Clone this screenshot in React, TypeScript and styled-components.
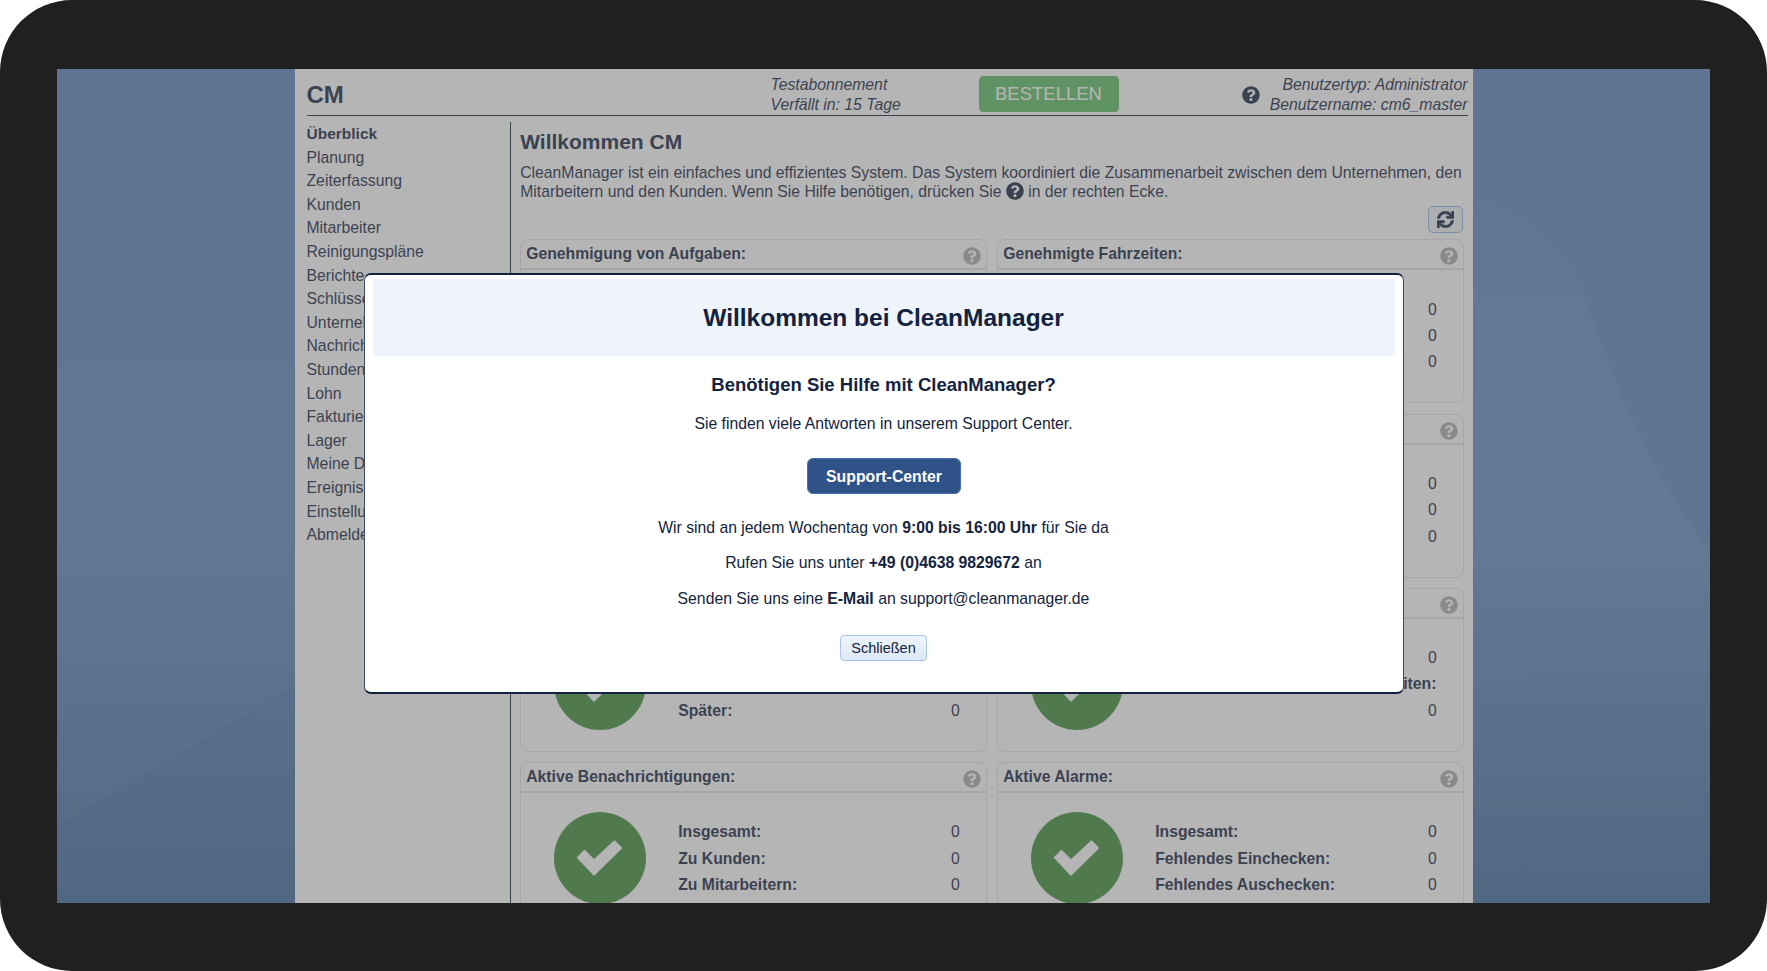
import React from 'react';
import styled, { createGlobalStyle } from 'styled-components';
import { FaQuestionCircle, FaSync } from 'react-icons/fa';

const GlobalStyle = createGlobalStyle`
    html, body {
        margin: 0;
        padding: 0;
        background: #ffffff;
    }
    body {
        font-family: "Liberation Sans", Arial, sans-serif;
        color: #13233f;
    }
`;

const Frame = styled.div`
    width: 1767px;
    height: 971px;
    box-sizing: border-box;
    padding: 69px 57px 68px;
    background: #212021;
    border-radius: 72px;
    overflow: hidden;
`;

const Screen = styled.div`
    position: relative;
    height: 834px;
    display: flex;
    justify-content: center;
    overflow: hidden;
    background: #5a85be;
`;

const Wallpaper = styled.svg`
    position: absolute;
    inset: 0;
    width: 100%;
    height: 100%;
`;

const Page = styled.div`
    position: relative;
    width: 1178px;
    box-sizing: border-box;
    padding: 0 6px 0 12px;
    background: #ffffff;
    display: flex;
    flex-direction: column;
`;

const Header = styled.header`
    height: 47px;
    flex: none;
    box-sizing: border-box;
    display: grid;
    grid-template-columns: 464px 208px 140px 1fr;
    align-items: center;
    margin-right: -1px;
    border-bottom: 1px solid #13233f;
`;

const Brand = styled.div`
    font-size: 24px;
    font-weight: 700;
    padding-top: 5px;
`;

const Trial = styled.div`
    font-size: 15.75px;
    font-style: italic;
    line-height: 20px;
    padding-top: 5px;
`;

const OrderButton = styled.button`
    height: 36px;
    margin-top: 3px;
    border: 1px solid #5cbf63;
    border-radius: 4px;
    background: #5cbf63;
    color: #ffffff;
    font-family: inherit;
    font-size: 18.5px;
    padding: 0;
`;

const UserBox = styled.div`
    display: flex;
    justify-content: flex-end;
    align-items: center;
    gap: 10px;
    font-size: 15.75px;
    font-style: italic;
    line-height: 20px;
    text-align: right;
    padding-top: 5px;
`;

const Body = styled.div`
    flex: 1;
    display: flex;
    margin-top: 6px;
    min-height: 0;
`;

const Sidebar = styled.nav`
    width: 203px;
    flex: none;
    border-right: 1px solid #13233f;
`;

const NavItem = styled.div<{ $active?: boolean }>`
    height: 23.6px;
    line-height: 23.6px;
    font-size: ${(p) => (p.$active ? 15.5 : 15.75)}px;
    font-weight: ${(p) => (p.$active ? 700 : 400)};
    white-space: nowrap;
`;

const Main = styled.main`
    flex: 1;
    min-width: 0;
    padding: 8px 3px 0 9.7px;
`;

const Title = styled.h1`
    margin: 0;
    font-size: 21px;
    line-height: 24px;
    font-weight: 700;
`;

const Intro = styled.p`
    margin: 10px 0 0;
    font-size: 15.75px;
    line-height: 18.7px;

    svg {
        vertical-align: 0;
        margin: -3px 0;
    }
`;

const Toolbar = styled.div`
    display: flex;
    justify-content: flex-end;
    margin-top: 5px;
    padding-right: 1px;
`;

const RefreshButton = styled.button`
    width: 35px;
    height: 27px;
    padding: 0;
    display: flex;
    align-items: center;
    justify-content: center;
    border: 1.5px solid #8fb6ea;
    border-radius: 5px;
    background: #f0f3f8;
    color: #13233f;

    svg {
        stroke: currentColor;
        stroke-width: 18px;
    }
`;

const Grid = styled.div`
    display: grid;
    grid-template-columns: 466.7px 466.7px;
    column-gap: 10.3px;
    row-gap: 10.2px;
    margin-top: 6px;
`;

const Card = styled.section`
    height: 164px;
    box-sizing: border-box;
    border: 1.5px solid #e4e4e4;
    border-radius: 8px;
`;

const CardHead = styled.div`
    height: 30px;
    box-sizing: border-box;
    display: flex;
    justify-content: space-between;
    padding: 5px 5px 0;
    border-bottom: 2px solid #e2e2e2;
`;

const CardTitle = styled.div`
    font-size: 15.75px;
    line-height: 18px;
    font-weight: 700;
`;

const HelpIcon = styled(FaQuestionCircle)`
    color: #adadad;
    margin-top: 2px;
`;

const CardBody = styled.div`
    display: flex;
    padding: 19px 0 0 33px;
`;

const StatusIcon = styled.svg`
    flex: none;
    width: 92px;
    height: 92px;
`;

const Stats = styled.div`
    flex: 1;
    min-width: 0;
    padding: 7.4px 26px 0 32px;
`;

const StatRow = styled.div`
    height: 26.3px;
    line-height: 26.3px;
    display: flex;
    justify-content: space-between;
    font-size: 15.75px;
`;

const StatLabel = styled.span`
    font-weight: 700;
    white-space: nowrap;
`;

const Backdrop = styled.div`
    position: absolute;
    inset: 0;
    display: flex;
    justify-content: center;
    align-items: flex-start;
    padding-top: 204px;
    background: rgba(100, 100, 100, 0.48);
`;

const Modal = styled.div`
    width: 1040px;
    height: 421px;
    box-sizing: border-box;
    display: flex;
    flex-direction: column;
    align-items: center;
    padding: 4px 8px;
    background: #ffffff;
    border-style: solid;
    border-color: #13233f #3b4a66;
    border-width: 2px 1px;
    border-radius: 7px;
    color: #13233f;
`;

const ModalBand = styled.div`
    align-self: stretch;
    height: 77px;
    flex: none;
    display: flex;
    align-items: center;
    justify-content: center;
    background: #eff4fb;
    font-size: 24.5px;
    font-weight: 700;
`;

const ModalHeading = styled.h2`
    margin: 17px 0 0;
    font-size: 18.5px;
    line-height: 24px;
    font-weight: 700;
`;

const ModalLine = styled.p<{ $top: number }>`
    margin: ${(p) => p.$top}px 0 0;
    font-size: 15.75px;
    line-height: 20px;
`;

const SupportButton = styled.button`
    margin: 24px 0 0 1px;
    width: 154px;
    height: 36px;
    padding: 1px 0 0;
    border: 1px solid #4a72ac;
    border-radius: 6px;
    background: #2f5288;
    color: #ffffff;
    font-family: inherit;
    font-size: 15.8px;
    font-weight: 700;
`;

const CloseButton = styled.button`
    margin-top: 26px;
    width: 87px;
    height: 26px;
    padding: 0;
    border: 1px solid #a9c4e6;
    border-radius: 4px;
    background: linear-gradient(#eef4fb, #dde9f7);
    color: #13233f;
    font-family: inherit;
    font-size: 14.5px;
`;

type Stat = { label: string; value?: number };
type Panel = { title: string; stats: Stat[] };

const navItems = [
    'Überblick',
    'Planung',
    'Zeiterfassung',
    'Kunden',
    'Mitarbeiter',
    'Reinigungspläne',
    'Berichte',
    'Schlüssel',
    'Unternehmen',
    'Nachrichten',
    'Stunden',
    'Lohn',
    'Fakturierung',
    'Lager',
    'Meine Daten',
    'Ereignisse',
    'Einstellungen',
    'Abmelden',
];

const panels: Panel[] = [
    {
        title: 'Genehmigung von Aufgaben:',
        stats: [
            { label: 'Insgesamt:', value: 0 },
            { label: 'Heute:', value: 0 },
            { label: 'Später:', value: 0 },
        ],
    },
    {
        title: 'Genehmigte Fahrzeiten:',
        stats: [
            { label: 'Insgesamt:', value: 0 },
            { label: 'Heute:', value: 0 },
            { label: 'Später:', value: 0 },
        ],
    },
    {
        title: 'Offene Aufgaben:',
        stats: [
            { label: 'Insgesamt:', value: 0 },
            { label: 'Heute:', value: 0 },
            { label: 'Später:', value: 0 },
        ],
    },
    {
        title: 'Offene Fahrzeiten:',
        stats: [
            { label: 'Insgesamt:', value: 0 },
            { label: 'Heute:', value: 0 },
            { label: 'Später:', value: 0 },
        ],
    },
    {
        title: 'Nicht zugewiesene Aufgaben:',
        stats: [
            { label: 'Insgesamt:', value: 0 },
            { label: 'Heute:', value: 0 },
            { label: 'Später:', value: 0 },
        ],
    },
    {
        title: 'Abwesenheiten:',
        stats: [
            { label: 'Insgesamt:', value: 0 },
            { label: 'Mitarbeitern mit langen Arbeitszeiten:' },
            { label: '', value: 0 },
        ],
    },
    {
        title: 'Aktive Benachrichtigungen:',
        stats: [
            { label: 'Insgesamt:', value: 0 },
            { label: 'Zu Kunden:', value: 0 },
            { label: 'Zu Mitarbeitern:', value: 0 },
        ],
    },
    {
        title: 'Aktive Alarme:',
        stats: [
            { label: 'Insgesamt:', value: 0 },
            { label: 'Fehlendes Einchecken:', value: 0 },
            { label: 'Fehlendes Auschecken:', value: 0 },
        ],
    },
];

const App: React.FC = () => {
    return (
        <Frame>
            <GlobalStyle />
            <Screen>
                <Wallpaper viewBox="0 0 1653 834" preserveAspectRatio="none" aria-hidden="true">
                    <defs>
                        <linearGradient id="wallBase" x1="0" y1="0" x2="0" y2="1">
                            <stop offset="0" stopColor="#5a85be" />
                            <stop offset="0.55" stopColor="#5a85be" />
                            <stop offset="1" stopColor="#3f6a9f" />
                        </linearGradient>
                        <linearGradient id="wallFade" x1="0" y1="0" x2="0" y2="1">
                            <stop offset="0" stopColor="#ffffff" stopOpacity="0.02" />
                            <stop offset="0.4" stopColor="#ffffff" stopOpacity="0.07" />
                            <stop offset="1" stopColor="#ffffff" stopOpacity="0" />
                        </linearGradient>
                    </defs>
                    <rect width="1653" height="834" fill="url(#wallBase)" />
                    <path d="M0 297H238V617L0 757Z" fill="#ffffff" fillOpacity="0.035" />
                    <path
                        d="M1416 129C1470 143 1513 181 1536 251C1570 349 1610 430 1653 481V834H1416Z"
                        fill="url(#wallFade)"
                    />
                </Wallpaper>
                <Page>
                    <Header>
                        <Brand>CM</Brand>
                        <Trial>
                            Testabonnement
                            <br />
                            Verfällt in: 15 Tage
                        </Trial>
                        <OrderButton>BESTELLEN</OrderButton>
                        <UserBox>
                            <FaQuestionCircle size={18} />
                            <div>
                                Benutzertyp: Administrator
                                <br />
                                Benutzername: cm6_master
                            </div>
                        </UserBox>
                    </Header>
                    <Body>
                        <Sidebar>
                            {navItems.map((item, index) => (
                                <NavItem key={item} $active={index === 0}>
                                    {item}
                                </NavItem>
                            ))}
                        </Sidebar>
                        <Main>
                            <Title>Willkommen CM</Title>
                            <Intro>
                                CleanManager ist ein einfaches und effizientes System. Das System koordiniert die
                                Zusammenarbeit zwischen dem Unternehmen, den Mitarbeitern und den Kunden. Wenn Sie
                                Hilfe benötigen, drücken Sie <FaQuestionCircle size={18} /> in der rechten Ecke.
                            </Intro>
                            <Toolbar>
                                <RefreshButton aria-label="Aktualisieren">
                                    <FaSync size={17} />
                                </RefreshButton>
                            </Toolbar>
                            <Grid>
                                {panels.map((panel) => (
                                    <Card key={panel.title}>
                                        <CardHead>
                                            <CardTitle>{panel.title}</CardTitle>
                                            <HelpIcon size={18} />
                                        </CardHead>
                                        <CardBody>
                                            <StatusIcon viewBox="0 0 92 92" aria-hidden="true">
                                                <circle cx="46" cy="46" r="46" fill="#3f8e38" />
                                                <polygon
                                                    points="24,45.5 30.5,39 40,48.5 60.5,29.5 67,36 40,62.5"
                                                    fill="#ffffff"
                                                    stroke="#ffffff"
                                                    strokeWidth="2"
                                                    strokeLinejoin="round"
                                                />
                                            </StatusIcon>
                                            <Stats>
                                                {panel.stats.map((stat) => (
                                                    <StatRow key={stat.label}>
                                                        <StatLabel>{stat.label}</StatLabel>
                                                        {stat.value !== undefined && <span>{stat.value}</span>}
                                                    </StatRow>
                                                ))}
                                            </Stats>
                                        </CardBody>
                                    </Card>
                                ))}
                            </Grid>
                        </Main>
                    </Body>
                </Page>
                <Backdrop>
                    <Modal>
                        <ModalBand>Willkommen bei CleanManager</ModalBand>
                        <ModalHeading>Benötigen Sie Hilfe mit CleanManager?</ModalHeading>
                        <ModalLine $top={17}>Sie finden viele Antworten in unserem Support Center.</ModalLine>
                        <SupportButton>Support-Center</SupportButton>
                        <ModalLine $top={24}>
                            Wir sind an jedem Wochentag von <b>9:00 bis 16:00 Uhr</b> für Sie da
                        </ModalLine>
                        <ModalLine $top={15}>
                            Rufen Sie uns unter <b>+49 (0)4638 9829672</b> an
                        </ModalLine>
                        <ModalLine $top={16}>
                            Senden Sie uns eine <b>E-Mail</b> an support@cleanmanager.de
                        </ModalLine>
                        <CloseButton>Schließen</CloseButton>
                    </Modal>
                </Backdrop>
            </Screen>
        </Frame>
    );
};

export default App;
